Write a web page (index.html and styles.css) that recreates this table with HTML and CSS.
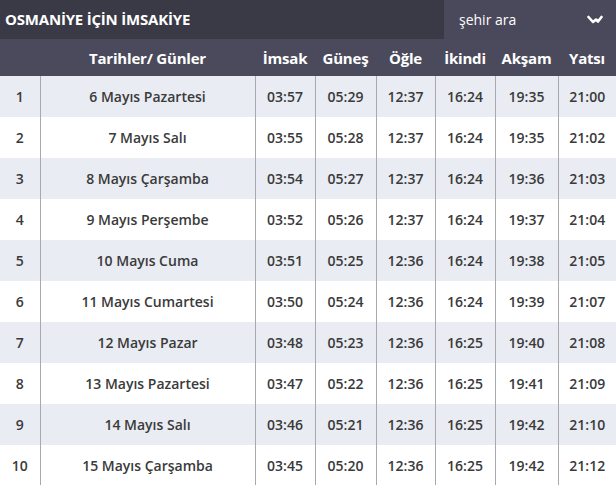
FILE: index.html
```html
<!DOCTYPE html>
<html lang="tr">
<head>
<meta charset="utf-8">
<link rel="stylesheet" href="styles.css">
</head>
<body>
<div class="widget">
  <div class="topbar">
    <h1 class="title">OSMANİYE İÇİN İMSAKİYE</h1>
    <div class="search">
      <span class="search-label">şehir ara</span>
      <svg class="chev" width="16" height="10" viewBox="0 0 16 10"><polyline points="1.5,2 6,7 9,4.5 11,6.5 14.5,2" fill="none" stroke="#fff" stroke-width="2.6" stroke-linejoin="round" stroke-linecap="round"/></svg>
    </div>
  </div>
  <table class="times">
    <colgroup>
      <col class="c-no"><col class="c-date"><col class="c-t1"><col class="c-t2"><col class="c-t3"><col class="c-t4"><col class="c-t5"><col class="c-t6">
    </colgroup>
    <thead>
      <tr><th></th><th>Tarihler/ Günler</th><th>İmsak</th><th>Güneş</th><th>Öğle</th><th>İkindi</th><th>Akşam</th><th>Yatsı</th></tr>
    </thead>
    <tbody>
      <tr><td>1</td><td>6 Mayıs Pazartesi</td><td>03:57</td><td>05:29</td><td>12:37</td><td>16:24</td><td>19:35</td><td>21:00</td></tr>
      <tr><td>2</td><td>7 Mayıs Salı</td><td>03:55</td><td>05:28</td><td>12:37</td><td>16:24</td><td>19:35</td><td>21:02</td></tr>
      <tr><td>3</td><td>8 Mayıs Çarşamba</td><td>03:54</td><td>05:27</td><td>12:37</td><td>16:24</td><td>19:36</td><td>21:03</td></tr>
      <tr><td>4</td><td>9 Mayıs Perşembe</td><td>03:52</td><td>05:26</td><td>12:37</td><td>16:24</td><td>19:37</td><td>21:04</td></tr>
      <tr><td>5</td><td>10 Mayıs Cuma</td><td>03:51</td><td>05:25</td><td>12:36</td><td>16:24</td><td>19:38</td><td>21:05</td></tr>
      <tr><td>6</td><td>11 Mayıs Cumartesi</td><td>03:50</td><td>05:24</td><td>12:36</td><td>16:24</td><td>19:39</td><td>21:07</td></tr>
      <tr><td>7</td><td>12 Mayıs Pazar</td><td>03:48</td><td>05:23</td><td>12:36</td><td>16:25</td><td>19:40</td><td>21:08</td></tr>
      <tr><td>8</td><td>13 Mayıs Pazartesi</td><td>03:47</td><td>05:22</td><td>12:36</td><td>16:25</td><td>19:41</td><td>21:09</td></tr>
      <tr><td>9</td><td>14 Mayıs Salı</td><td>03:46</td><td>05:21</td><td>12:36</td><td>16:25</td><td>19:42</td><td>21:10</td></tr>
      <tr><td>10</td><td>15 Mayıs Çarşamba</td><td>03:45</td><td>05:20</td><td>12:36</td><td>16:25</td><td>19:42</td><td>21:12</td></tr>
    </tbody>
  </table>
</div>
</body>
</html>
```

FILE: styles.css
```css
html, body {
  margin: 0;
  padding: 0;
  background: #ffffff;
}
.widget {
  width: 616px;
  font-family: "Open Sans", "Noto Sans", sans-serif;
}
.topbar {
  display: flex;
  height: 39px;
  background: #3a3946;
}
.title {
  flex: 1;
  margin: 0;
  padding-left: 5px;
  font-size: 15px;
  font-weight: 700;
  color: #ffffff;
  line-height: 39px;
  letter-spacing: -0.2px;
}
.search {
  width: 172px;
  background: #4a495b;
  display: flex;
  align-items: center;
  justify-content: space-between;
  padding: 0 13px 0 15px;
  box-sizing: border-box;
}
.search-label {
  color: #ffffff;
  font-size: 14px;
}
.chev {
  display: block;
  margin-top: 1px;
}
.times {
  width: 616px;
  border-collapse: collapse;
  table-layout: fixed;
}
.c-no { width: 40px; }
.c-date { width: 215px; }
.c-t1 { width: 60px; }
.c-t2 { width: 61px; }
.c-t3 { width: 59px; }
.c-t4 { width: 60px; }
.c-t5 { width: 63px; }
.c-t6 { width: 58px; }
.times thead tr {
  background: #4a4a5c;
  height: 37px;
}
.times th {
  color: #ffffff;
  font-size: 15px;
  font-weight: 700;
  text-align: center;
  padding: 0;
  white-space: nowrap;
  letter-spacing: -0.2px;
}
.times tbody tr {
  height: 41px;
}
.times tbody tr:nth-child(odd) {
  background: #e9ecf2;
}
.times tbody tr:nth-child(even) {
  background: #ffffff;
}
.times td {
  color: #3a3a3a;
  font-size: 14px;
  font-weight: 600;
  text-align: center;
  padding: 0;
  white-space: nowrap;
  border-left: 1px solid #a9a9ad;
}
.times td:first-child {
  border-left: none;
}
```
